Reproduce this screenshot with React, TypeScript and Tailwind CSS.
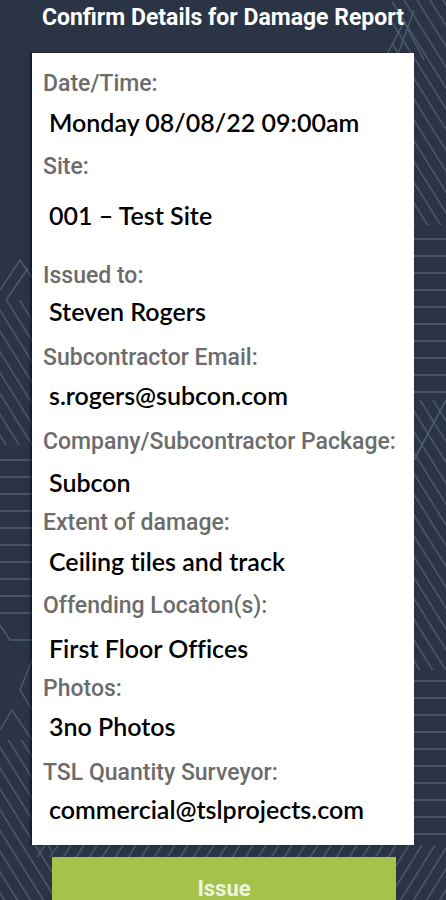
import React from 'react';

// margins reproduce the uneven spacing of the original mockup
const rows: { label: string; value: string; lm: string; vm: string }[] = [
  { label: 'Date/Time:', value: 'Monday 08/08/22 09:00am', lm: 'mt-[16px]', vm: 'mt-[7px]' },
  { label: 'Site:', value: '001 – Test Site', lm: 'mt-[12px]', vm: 'mt-[17px]' },
  { label: 'Issued to:', value: 'Steven Rogers', lm: 'mt-[28px]', vm: 'mt-[4px]' },
  { label: 'Subcontractor Email:', value: 's.rogers@subcon.com', lm: 'mt-[14px]', vm: 'mt-[6px]' },
  { label: 'Company/Subcontractor Package:', value: 'Subcon', lm: 'mt-[14px]', vm: 'mt-[9px]' },
  { label: 'Extent of damage:', value: 'Ceiling tiles and track', lm: 'mt-[8px]', vm: 'mt-[7px]' },
  { label: 'Offending Locaton(s):', value: 'First Floor Offices', lm: 'mt-[12px]', vm: 'mt-[11px]' },
  { label: 'Photos:', value: '3no Photos', lm: 'mt-[8px]', vm: 'mt-[6px]' },
  { label: 'TSL Quantity Surveyor:', value: 'commercial@tslprojects.com', lm: 'mt-[14px]', vm: 'mt-[5px]' },
];

function BackgroundPattern() {
  const line = '#4d5d6e';
  return (
    <svg className="absolute inset-0 w-full h-full" viewBox="0 0 446 900" preserveAspectRatio="none">
      <defs>
        <pattern id="diag" width="13" height="900" patternUnits="userSpaceOnUse" patternTransform="skewX(32)">
          <line x1="1" y1="0" x2="1" y2="900" stroke={line} strokeWidth="1.6" />
        </pattern>
        <pattern id="diag2" width="13" height="900" patternUnits="userSpaceOnUse" patternTransform="skewX(-32)">
          <line x1="1" y1="0" x2="1" y2="900" stroke={line} strokeWidth="1.6" />
        </pattern>
        <pattern id="hl" width="20" height="17" patternUnits="userSpaceOnUse">
          <line x1="0" y1="1" x2="20" y2="1" stroke={line} strokeWidth="1.6" />
        </pattern>
      </defs>
      {/* top right */}
      <rect x="392" y="0" width="54" height="225" fill="url(#diag)" />
      <path d="M384 60 L404 22 L424 60 M396 60 L414 10" stroke={line} strokeWidth="1.4" fill="none" />
      {/* right side */}
      <rect x="414" y="225" width="32" height="175" fill="url(#hl)" />
      <rect x="414" y="400" width="32" height="270" fill="url(#diag)" />
      <path d="M414 460 L446 400" stroke={line} strokeWidth="1.6" fill="none" />
      <rect x="414" y="672" width="32" height="175" fill="url(#hl)" />
      <rect x="396" y="845" width="50" height="55" fill="url(#diag2)" />
      {/* left side */}
      <path d="M0 290 L20 260 L32 278 M6 300 L28 268" stroke={line} strokeWidth="1.4" fill="none" />
      <rect x="0" y="300" width="32" height="145" fill="url(#diag)" />
      <rect x="0" y="445" width="32" height="170" fill="url(#hl)" />
      <path d="M0 625 L10 640 L32 640 M32 660 L20 690 L32 710 M0 730 L12 710 L32 740" stroke={line} strokeWidth="1.4" fill="none" />
      <rect x="0" y="740" width="52" height="160" fill="url(#diag)" />
      {/* under card */}
      <rect x="32" y="845" width="364" height="12" fill="url(#diag2)" />
    </svg>
  );
}

export default function App() {
  return (
    <div className="relative w-[446px] h-[900px] overflow-hidden bg-[#2b3445]">
      <BackgroundPattern />
      <div className="relative flex flex-col">
        {/* title */}
        <div className="h-[53px] flex items-start justify-center pt-[4px]">
          <h1
            className="text-white text-[23px] font-bold leading-[28px] whitespace-nowrap"
            style={{ fontFamily: 'Roboto, sans-serif' }}
          >
            Confirm Details for Damage Report
          </h1>
        </div>

        {/* details card */}
        <div className="mx-[32px] bg-white pb-[18px] shadow-[-2px_0_2px_rgba(0,0,0,0.5)] flex flex-col">
          {rows.map((r) => (
            <React.Fragment key={r.label}>
              <div
                className={`${r.lm} h-[30px] flex items-center pl-[11px] text-[23px] font-medium text-[#6c6c6c] whitespace-nowrap`}
                style={{ fontFamily: 'Roboto, sans-serif' }}
              >
                {r.label}
              </div>
              <div
                className={`${r.vm} h-[34px] flex items-center pl-[17px] text-[25px] font-semibold text-black whitespace-nowrap [font-variant-ligatures:none]`}
                style={{ fontFamily: 'Lato, sans-serif' }}
              >
                {r.value}
              </div>
            </React.Fragment>
          ))}
        </div>

        {/* action */}
        <div className="mt-[12px] ml-[52px] mr-[50px]">
          <button
            className="w-full h-[64px] bg-[#a5c24b] text-[#eef4e0] text-[22px] font-bold pb-[16px] flex items-end justify-center"
            style={{ fontFamily: 'Roboto, sans-serif' }}
          >
            Issue
          </button>
        </div>
      </div>
    </div>
  );
}
